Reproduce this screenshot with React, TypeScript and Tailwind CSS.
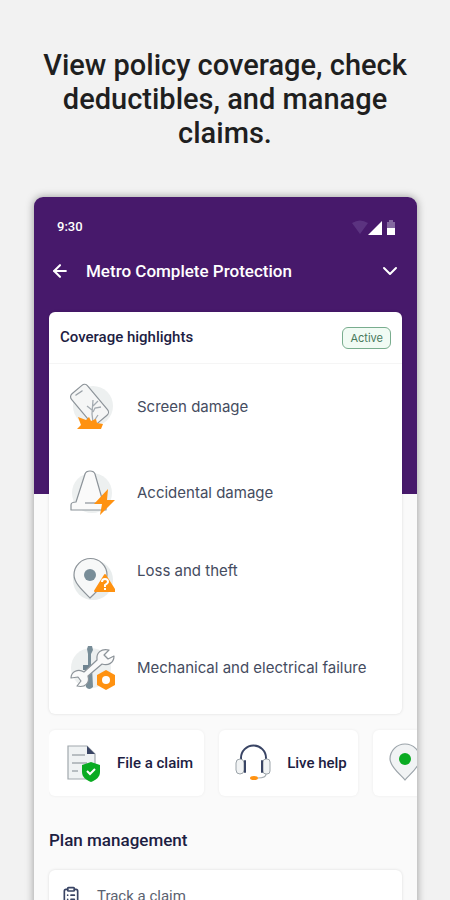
import { ArrowLeft, ChevronDown, ClipboardList } from "lucide-react";
import type { ReactNode } from "react";

function ScreenIcon() {
  return (
    <svg className="size-12 shrink-0" viewBox="0 0 48 48" fill="none" aria-hidden="true">
      <circle cx="26" cy="23" r="20" fill="#edf0f0" />
      <rect x="12" y="2" width="21" height="39" rx="4" transform="rotate(-40 22.5 21.5)" fill="#f5f6f6" stroke="#8c9399" strokeWidth="1.2" />
      <path d="m9 12 6-4" stroke="#9aa1a7" strokeWidth="1.5" strokeLinecap="round" />
      <path d="M26 39l-1-8 1-14M25 27l-5-4M26 29l2-4 6-1M26 23l5-5M27 38l4-6" stroke="#a4abb1" strokeWidth="1.3" />
      <path d="M10 46l4-4-3-8 8 3 3-3 2 4 5-2 1 4 6 1-2 5z" fill="#ff9211" />
    </svg>
  );
}

function ConeIcon() {
  return (
    <svg className="size-12 shrink-0" viewBox="0 0 48 48" fill="none" aria-hidden="true">
      <circle cx="25" cy="24" r="20" fill="#edf0f0" />
      <path d="M9 33 18 5q1-3 5-3t5 3l8 28 3 1v7H4v-5q0-3 5-3z" fill="#fafafa" stroke="#8c9399" strokeWidth="1.2" strokeLinejoin="round" />
      <path d="M18 34h16" stroke="#8c9399" strokeWidth="1.2" />
      <path d="m41 20-1 11h8L33 46l2-11h-8z" fill="#ff9211" />
    </svg>
  );
}

function LossIcon() {
  return (
    <svg className="size-12 shrink-0" viewBox="0 0 48 48" fill="none" aria-hidden="true">
      <circle cx="26" cy="25" r="20" fill="#e9eded" />
      <path d="M23 43C16 36 7 28 7 20a16 16 0 0 1 33 0c0 8-10 16-17 23Z" fill="#f7f8f8" stroke="#8c9399" strokeWidth="1.2" />
      <circle cx="23" cy="20" r="6" fill="#788d98" />
      <path d="M38 20 48 36H28z" fill="#ff9211" stroke="#ff9211" strokeWidth="2" strokeLinejoin="round" />
      <path d="M35 27q0-3 3-3t3 3q0 1-3 3v2M38 33v2" stroke="#fff" strokeWidth="2" />
    </svg>
  );
}

function RepairIcon() {
  return (
    <svg className="size-12 shrink-0" viewBox="0 0 48 48" fill="none" aria-hidden="true">
      <circle cx="24" cy="24" r="20" fill="#edf0f0" />
      <path d="M21 2h4l1 4-2 4v13h1l1 20q-4 4-7 0V23h2V10l-1-5z" fill="#788d98" />
      <path d="M16 21h6v5h-6z" fill="#6e8390" />
      <path d="M47 12 41 15l-4-4 5-5c-8-2-13 3-12 10L17 28C11 24 4 28 4 34l7-1 3 4-4 5c8 2 13-3 11-10l14-12c6 2 12-1 12-8Z" fill="#fafafa" stroke="#8c9399" strokeWidth="1.2" strokeLinejoin="round" />
      <path d="M39 26 48 31v10l-9 5-9-5V31z" fill="#ff9211" />
      <circle cx="39" cy="36" r="4" fill="#fff" />
    </svg>
  );
}

function ClaimIcon() {
  return (
    <svg className="h-10 w-9 shrink-0" viewBox="0 0 36 40" fill="none" aria-hidden="true">
      <path d="M3 3h19l8 8v25H3z" fill="#eff2f3" stroke="#a1a8ad" strokeWidth="1.2" />
      <path d="M22 3v8h8z" fill="#394464" />
      <path d="M7 12h13M7 20h15M7 28h6" stroke="#a5acb1" strokeWidth="1.3" />
      <path d="M26 19 35 22v7c0 5-4 8-9 10-5-2-9-5-9-10v-7z" fill="#0aab22" />
      <path d="m22 28 3 3 5-5" stroke="#fff" strokeWidth="2" />
    </svg>
  );
}

function HeadsetIcon() {
  return (
    <svg className="h-10 w-9 shrink-0" viewBox="0 0 36 40" fill="none" aria-hidden="true">
      <path d="M6 17v-2a12 12 0 0 1 25 0v2" stroke="#394464" strokeWidth="2" />
      <rect x="1" y="16" width="8" height="15" rx="4" fill="#f1f3f4" stroke="#9ba3a9" />
      <rect x="28" y="16" width="7" height="15" rx="3" fill="#f1f3f4" stroke="#9ba3a9" />
      <path d="M10 18v11M27 18v11" stroke="#394464" strokeWidth="2" strokeLinecap="round" />
      <path d="M31 31q0 4-8 4" stroke="#a5acb1" strokeWidth="1.2" />
      <ellipse cx="19" cy="35" rx="4" ry="2" fill="#ff9211" />
    </svg>
  );
}

function LocationIcon() {
  return (
    <svg className="h-10 w-8 shrink-0" viewBox="0 0 32 40" fill="none" aria-hidden="true">
      <path d="M16 37C12 32 1 24 1 16a15 15 0 0 1 30 0c0 8-11 16-15 21Z" fill="#f1f3f4" stroke="#9ba3a9" strokeWidth="1.2" />
      <circle cx="16" cy="16" r="6" fill="#0aab22" />
    </svg>
  );
}

function StatusIcons() {
  return (
    <svg className="h-4 w-11" viewBox="0 0 44 16" aria-hidden="true">
      <path d="M0 4q8-5 16 0L8 15z" fill="#5b3380" />
      <path d="M30 2v14H16z" fill="#fff" />
      <path d="M35 3h2V1h4v2h2v6h-8z" fill="#8468a0" />
      <path d="M35 9h8v7h-8z" fill="#fff" />
    </svg>
  );
}

function Highlight({ icon, children, className = "" }: { icon: ReactNode; children: ReactNode; className?: string }) {
  return (
    <li className="flex h-[86px] items-center gap-[22px] px-[18px] last:h-[92px]">
      {icon}
      <span className={`font-[Inter,sans-serif] text-[15px] leading-5 text-[#454c60] ${className}`}>{children}</span>
    </li>
  );
}

function Action({ icon, label }: { icon: ReactNode; label: string }) {
  return (
    <button type="button" aria-label={label || "Find a location"} className="flex h-[66px] shrink-0 items-center gap-4 rounded-md bg-white pr-[11px] pl-4 text-[15px] font-medium text-[#1c2042] shadow-[0_0_3px_#00000010]">
      {icon}
      {label}
    </button>
  );
}

export default function App() {
  return (
    <main className="flex h-screen flex-col overflow-hidden bg-[#f2f2f2] font-[Roboto,sans-serif]">
      <h1 className="mx-auto max-w-[400px] shrink-0 px-3 pt-12 pb-[47px] text-center text-[29px] leading-[34px] font-medium text-[#1f1f1f]">
        View policy coverage, check deductibles, and manage claims.
      </h1>
      <div className="mr-[33px] ml-[34px] shrink-0 overflow-hidden rounded-t-[9px] bg-[linear-gradient(#47196b_297px,#fafafa_297px)] px-[15px] shadow-[0_0_8px_#00000060]">
        <div className="flex items-center justify-between pt-[22px] pr-1.5 pl-2 text-white">
          <span className="text-[13px] leading-4 font-medium">9:30</span>
          <StatusIcons />
        </div>
        <header className="flex items-center pt-6 pb-[29px] text-white">
          <button type="button" aria-label="Back" className="pl-px">
            <ArrowLeft className="size-5" strokeWidth={2.5} />
          </button>
          <h2 className="pl-4 text-[17px] leading-6 font-medium">Metro Complete Protection</h2>
          <button type="button" aria-label="Show plans" className="ml-auto">
            <ChevronDown className="size-6" />
          </button>
        </header>
        <section className="rounded-md bg-white shadow-[0_0_3px_#00000020]">
          <div className="flex h-[52px] items-center justify-between border-b border-[#f5f5f5] pr-[11px] pl-[11px]">
            <h3 className="text-[15px] font-medium text-[#1c2042]">Coverage highlights</h3>
            <span className="rounded-md border border-[#79ad8e] bg-[#f1fbf4] px-[7px] font-[Inter,sans-serif] text-[11px] leading-5 text-[#48795b]">Active</span>
          </div>
          <ul>
            <Highlight icon={<ScreenIcon />}>Screen damage</Highlight>
            <Highlight icon={<ConeIcon />}>Accidental damage</Highlight>
            <Highlight icon={<LossIcon />} className="pb-4">Loss and theft</Highlight>
            <Highlight icon={<RepairIcon />}>Mechanical and electrical failure</Highlight>
          </ul>
        </section>
        <div className="-mr-[15px] flex gap-[15px] overflow-hidden py-4">
          <Action icon={<ClaimIcon />} label="File a claim" />
          <Action icon={<HeadsetIcon />} label="Live help" />
          <Action icon={<LocationIcon />} label="" />
        </div>
        <h3 className="pt-4 text-[17px] leading-6 font-medium text-[#1c2042]">Plan management</h3>
        <button type="button" className="mt-[18px] flex w-full items-center gap-4 rounded-md bg-white px-3 py-4 text-left text-[15px] leading-5 text-[#5b6270] shadow-[0_0_3px_#00000020]">
          <ClipboardList className="size-5 text-[#394464]" />
          Track a claim
        </button>
      </div>
    </main>
  );
}
